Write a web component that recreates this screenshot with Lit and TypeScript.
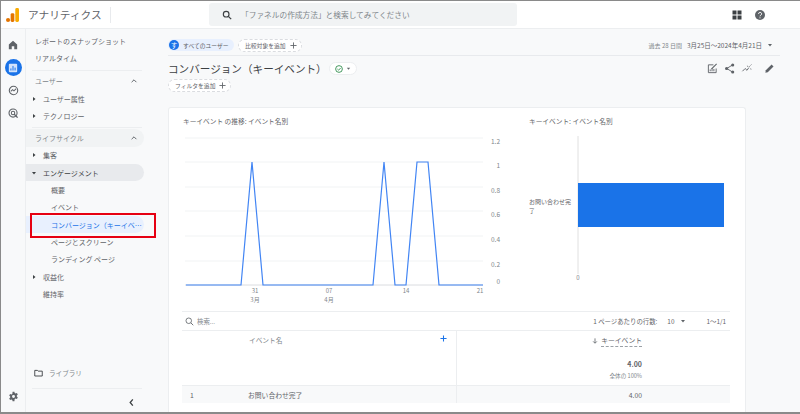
import { LitElement, css, html, svg } from 'lit';
import { customElement } from 'lit/decorators.js';

const FONT = '"Noto Sans CJK JP", Roboto, sans-serif';

const linePts = '186,285 241,285 252,162 263,285 373,285 384,162 395,285 406,285 417,162 428,162 439,285 483,285';
const gridYs = [138, 162, 187, 211, 236, 261, 285];
const yLabels = ['1.2', '1', '0.8', '0.6', '0.4', '0.2', '0'];

const arrow = (down = false) => html`<svg class="tri" viewBox="0 0 6 6" width="6" height="6">
  <path d=${down ? 'M1 2h4L3 4.5z' : 'M2 1l2.5 2L2 5z'} fill="#3c4043"></path>
</svg>`;

const chevUp = html`<svg class="chev" viewBox="0 0 10 10" width="8" height="8">
  <path d="M2 6.5L5 3.5l3 3" fill="none" stroke="#5f6368" stroke-width="1.2"></path>
</svg>`;

const plus = html`<svg viewBox="0 0 8 8" width="7" height="7">
  <path d="M4 .5v7M.5 4h7" stroke="#5f6368" stroke-width="1"></path>
</svg>`;

@customElement('app-sidebar')
class AppSidebar extends LitElement {
  static styles = css`
    :host {
      display: flex;
      flex-direction: column;
      width: 134px;
      flex: none;
      padding-top: 3px;
      font-family: ${css([FONT] as any)};
      background: #f8f9fa;
      font-size: 7px;
      color: #5f6368;
    }
    .row {
      display: flex;
      align-items: center;
      height: 17.3px;
      width: 118px;
      box-sizing: border-box;
      padding-left: 9px;
      border-radius: 0 9px 9px 0;
      white-space: nowrap;
      flex: none;
    }
    .row.sub { padding-left: 25px; }
    .row.child { padding-left: 5px; }
    .row.flat { padding-left: 17px; }
    .tri { margin-right: 6px; flex: none; }
    .row.active { background: #e8eaed; color: #3c4043; }
    .row.sel { background: #e8f0fe; color: #1a73e8; }
    .row.head { justify-content: space-between; padding-right: 6px; color: #80868b; }
    .row.head.pill { background: #f1f3f4; }
    .rule { height: 1px; background: #eceef0; width: 110px; margin: 3px 0 2px 6px; flex: none; }
    .rule.tight { margin: 3px 0 1px 6px; }
    .spacer { flex: 1; }
    .lib { display: flex; align-items: center; gap: 6px; padding-left: 8px; height: 17px; font-size: 6.6px; color: #80868b; margin-bottom: 7px; flex: none; }
    .collapse { display: flex; justify-content: flex-end; align-items: center; width: 109px; height: 23px; padding-top: 4px; box-sizing: border-box; flex: none; }
  `;

  render() {
    return html`
      <div class="row">レポートのスナップショット</div>
      <div class="row">リアルタイム</div>
      <div class="rule"></div>
      <div class="row head"><span>ユーザー</span>${chevUp}</div>
      <div class="row child">${arrow()}<span>ユーザー属性</span></div>
      <div class="row child">${arrow()}<span>テクノロジー</span></div>
      <div class="rule tight"></div>
      <div class="row head pill"><span>ライフサイクル</span>${chevUp}</div>
      <div class="row child">${arrow()}<span>集客</span></div>
      <div class="row child active">${arrow(true)}<span>エンゲージメント</span></div>
      <div class="row sub">概要</div>
      <div class="row sub">イベント</div>
      <div class="row sub sel"><span>コンバージョン（キーイベ…</span></div>
      <div class="row sub">ページとスクリーン</div>
      <div class="row sub">ランディング ページ</div>
      <div class="row child">${arrow()}<span>収益化</span></div>
      <div class="row flat">維持率</div>
      <div class="spacer"></div>
      <div class="lib">
        <svg viewBox="0 0 12 10" width="9" height="8">
          <path d="M1 1.5h3.5l1 1H11v6.5H1z" fill="none" stroke="#3c4043" stroke-width="1.2"></path>
        </svg>
        <span>ライブラリ</span>
      </div>
      <div class="rule" style="margin:0 0 0 6px"></div>
      <div class="collapse">
        <svg viewBox="0 0 8 10" width="7" height="9">
          <path d="M5.5 1.5L2.5 5l3 3.5" fill="none" stroke="#3c4043" stroke-width="1.5"></path>
        </svg>
      </div>
    `;
  }
}

@customElement('app-root')
export class AppRoot extends LitElement {
  static styles = css`
    :host {
      display: block;
      width: 800px;
      height: 414px;
      font-family: ${css([FONT] as any)};
      color: #5f6368;
      overflow: hidden;
    }
    .frame {
      position: relative;
      width: 800px;
      height: 414px;
      box-sizing: border-box;
      border: solid #8a8a8a;
      border-width: 1px 0 2px 1px;
      display: flex;
      flex-direction: column;
      background: #f8f9fa;
    }
    header {
      height: 28px;
      flex: none;
      display: flex;
      align-items: center;
      background: #fff;
      border-bottom: 1px solid #eceef0;
      box-sizing: border-box;
    }
    .logo { margin-left: 5px; flex: none; }
    .brand { margin-left: 9px; font-size: 10.7px; color: #5f6368; width: 82px; flex: none; white-space: nowrap; }
    .sep { width: 1px; height: 16px; background: #e8eaed; flex: none; }
    .search {
      margin-left: 98px;
      width: 308px;
      height: 23px;
      background: #f1f3f4;
      border-radius: 3px;
      display: flex;
      align-items: center;
      padding-left: 13px;
      gap: 9px;
      font-size: 7.7px;
      color: #80868b;
      box-sizing: border-box;
      flex: none;
    }
    .tools { margin-left: auto; display: flex; align-items: center; gap: 13px; margin-right: 35px; }
    .body { flex: 1; display: flex; min-height: 0; }
    .rail {
      width: 25px;
      flex: none;
      display: flex;
      flex-direction: column;
      align-items: center;
      background: #f8f9fa;
      border-right: 1px solid #eceef0;
      padding-top: 7px;
      box-sizing: border-box;
      gap: 6px;
    }
    .rail button {
      all: unset;
      width: 17px;
      height: 17px;
      border-radius: 50%;
      display: flex;
      align-items: center;
      justify-content: center;
    }
    .rail button.on { background: #1a73e8; }
    .rail .gear { margin-top: auto; margin-bottom: 7px; }
    main {
      flex: 1;
      min-width: 0;
      padding: 8px 0 0 8px;
      display: flex;
      flex-direction: column;
    }
    .top {
      width: 612px;
      display: flex;
      align-items: center;
      gap: 4px;
      height: 16px;
      padding-bottom: 2px;
      border-bottom: 1px solid #e8eaed;
      box-sizing: content-box;
      flex: none;
    }
    .chip {
      display: inline-flex;
      align-items: center;
      height: 12px;
      border-radius: 7px;
      font-size: 5.8px;
      white-space: nowrap;
      box-sizing: border-box;
    }
    .chip.user { background: #e8f0fe; width: 66px; gap: 4px; color: #5f6368; }
    .avatar {
      width: 10px;
      height: 10px;
      margin-left: 1px;
      border-radius: 50%;
      background: #1a73e8;
      color: #fff;
      font-size: 6.5px;
      line-height: 10px;
      text-align: center;
      flex: none;
    }
    .chip.add { border: 1px dashed #dadce0; padding: 0 4px 0 6px; gap: 4px; background: #fff; height: 13px; }
    .date { margin-left: auto; margin-right: 7px; font-size: 6.5px; display: flex; align-items: center; gap: 5px; }
    .date b { font-weight: 400; font-size: 6px; color: #80868b; }
    .titlerow { display: flex; align-items: center; height: 21px; padding-top: 2px; width: 612px; flex: none; }
    h1 { margin: 0; font-size: 10.6px; font-weight: 400; color: #3c4043; white-space: nowrap; }
    .status {
      margin-left: 2px;
      width: 28px;
      height: 13px;
      border: 1px solid #eceef0;
      border-radius: 7px;
      display: flex;
      align-items: center;
      justify-content: center;
      gap: 3px;
      box-sizing: border-box;
      background: #fff;
    }
    .actions { margin-left: auto; margin-right: 5px; display: flex; align-items: center; gap: 6px; }
    .filter { flex: none; align-self: flex-start; }
    .card {
      position: relative;
      margin-top: 15px;
      width: 578px;
      flex: 1;
      min-height: 0;
      background: #fff;
      border: 1px solid #eceef0;
      border-bottom: none;
      border-radius: 3px 3px 0 0;
      box-sizing: border-box;
      display: flex;
      flex-direction: column;
    }
    .charts { height: 203px; flex: none; }
    .charts svg { display: block; }
    .charts text { font-family: ${css([FONT] as any)}; }
    .table { margin: 0 15px 0 13px; flex: 1; font-size: 6.8px; display: flex; flex-direction: column; }
    .tbar {
      height: 20px;
      flex: none;
      display: flex;
      align-items: center;
      border-top: 1px solid #eceef0;
      border-bottom: 1px solid #eceef0;
      box-sizing: border-box;
      padding-left: 3px;
      gap: 3px;
      font-size: 6.4px;
    }
    .tbar .hint { color: #80868b; }
    .pager { margin-left: auto; display: flex; align-items: center; font-size: 6.4px; }
    .pager .num { margin-left: 10px; }
    .pager .dd { margin-left: 6px; margin-right: 20px; }
    .pager .rng { margin-right: 4px; }
    .thead { display: grid; grid-template-columns: 275px 1fr; height: 54px; flex: none; }
    .thead .dim { border-right: 1px solid #eceef0; padding: 4px 9px 0 67px; display: flex; justify-content: space-between; }
    .thead .dim span { font-size: 6.7px; color: #80868b; }
    .thead .met { display: flex; flex-direction: column; align-items: flex-end; padding-right: 88px; }
    .mh { display: flex; align-items: center; gap: 3px; margin-top: 4px; }
    .mh span { border-bottom: 1px dashed #9aa0a6; line-height: 11px; font-size: 6.8px; }
    .tot { margin-top: 12px; font-size: 7px; font-weight: 700; color: #5f6368; line-height: 10px; }
    .share { font-size: 5.6px; color: #80868b; margin-top: 3px; line-height: 8px; }
    .trow {
      display: grid;
      grid-template-columns: 275px 1fr;
      height: 18px;
      flex: none;
      background: #f8f9fa;
      border-top: 1px solid #eceef0;
      box-sizing: border-box;
      align-items: center;
      font-size: 6.8px;
    }
    .trow .l { display: flex; border-right: 1px solid #eceef0; height: 100%; align-items: center; }
    .trow .i { width: 66px; padding-left: 8px; box-sizing: border-box; }
    .trow .v { text-align: right; padding-right: 88px; }
    .mark {
      position: absolute;
      left: 29px;
      top: 212px;
      width: 126px;
      height: 25px;
      border: 2px solid #e60012;
      box-sizing: border-box;
    }
  `;

  lineChart() {
    return svg`
      <text x="14" y="16" font-size="6.7" fill="#5f6368">キーイベント の推移: イベント名別</text>
      ${gridYs.map((y, i) => svg`
        <line x1="16" x2="314" y1=${y - 108} y2=${y - 108} stroke=${i === 6 ? '#dadce0' : '#f1f3f4'} stroke-width="1"></line>
        <text x="331" y=${i === 6 ? y - 109 : y - 102} font-size="6.5" text-anchor="end" fill="#80868b">${yLabels[i]}</text>
      `)}
      <polyline transform="translate(-169 -108)" points=${linePts} fill="none" stroke="#4285f4" stroke-width="1.2"></polyline>
      <g font-size="6" fill="#80868b" text-anchor="middle">
        <text x="86" y="185">31</text><text x="86" y="193.5">3月</text>
        <text x="160" y="185">07</text><text x="160" y="193.5">4月</text>
        <text x="237" y="185">14</text>
        <text x="311" y="185">21</text>
      </g>
      <text x="360" y="16" font-size="6.7" fill="#5f6368">キーイベント: イベント名別</text>
      <line x1="409" x2="409" y1="28" y2="166" stroke="#e0e0e0" stroke-width="1"></line>
      <rect x="409" y="75" width="146" height="44" fill="#1a73e8"></rect>
      <g font-size="6" fill="#5f6368">
        <text x="360" y="95.5">お問い合わせ完</text>
        <text x="360" y="104.5">了</text>
      </g>
      <text x="409" y="172" font-size="6" text-anchor="middle" fill="#80868b">0</text>
    `;
  }

  render() {
    return html`
      <div class="frame">
        <header>
          <svg class="logo" viewBox="0 0 14 15" width="13" height="14">
            <rect x="10" y="0" width="4" height="15" rx="1.5" fill="#f9ab00"></rect>
            <rect x="5" y="5.5" width="4" height="9.5" rx="1.5" fill="#e37400"></rect>
            <circle cx="2.2" cy="12.8" r="2.2" fill="#e37400"></circle>
          </svg>
          <span class="brand">アナリティクス</span>
          <span class="sep"></span>
          <div class="search">
            <svg viewBox="0 0 12 12" width="10" height="10">
              <circle cx="5" cy="5" r="3.4" fill="none" stroke="#3c4043" stroke-width="1.4"></circle>
              <path d="M7.6 7.6L11 11" stroke="#3c4043" stroke-width="1.5"></path>
            </svg>
            <span>「ファネルの作成方法」と検索してみてください</span>
          </div>
          <div class="tools">
            <svg viewBox="0 0 10 10" width="10" height="10" fill="#3c4043">
              <rect width="4" height="4" x="0.5" y="0.5"></rect><rect width="4" height="4" x="5.5" y="0.5"></rect>
              <rect width="4" height="4" x="0.5" y="5.5"></rect><rect width="4" height="4" x="5.5" y="5.5"></rect>
            </svg>
            <svg viewBox="0 0 10 10" width="10" height="10">
              <circle cx="5" cy="5" r="5" fill="#5f6368"></circle>
              <path d="M3.6 3.9a1.5 1.5 0 1 1 2.3 1.2c-.6.4-.9.6-.9 1.2" fill="none" stroke="#fff" stroke-width="1"></path>
              <circle cx="5" cy="7.8" r=".6" fill="#fff"></circle>
            </svg>
          </div>
        </header>
        <div class="body">
          <div class="rail">
            <button>
              <svg viewBox="0 0 12 12" width="10" height="10"><path d="M6 1L1 5.5V11h3.5V7.5h3V11H11V5.5z" fill="#5f6368"></path></svg>
            </button>
            <button class="on">
              <svg viewBox="0 0 12 12" width="10" height="10">
                <rect x="1" y="1" width="10" height="10" rx="1.2" fill="#d2e3fc"></rect>
                <path d="M3.5 9V6.5M6 9V3.5M8.5 9V5.5" stroke="#1a73e8" stroke-width="1.2"></path>
              </svg>
            </button>
            <button>
              <svg viewBox="0 0 12 12" width="11" height="11">
                <circle cx="6" cy="6" r="4.6" fill="none" stroke="#5f6368" stroke-width="1.2"></circle>
                <path d="M3 7l2-2 1.5 1.3L9 4" fill="none" stroke="#5f6368" stroke-width="1.1"></path>
              </svg>
            </button>
            <button>
              <svg viewBox="0 0 12 12" width="11" height="11">
                <circle cx="5.5" cy="5.5" r="4.4" fill="none" stroke="#5f6368" stroke-width="1.2"></circle>
                <circle cx="5.5" cy="5.5" r="1.9" fill="none" stroke="#5f6368" stroke-width="1.1"></circle>
                <path d="M6.5 6.5l4 4" stroke="#5f6368" stroke-width="1.5"></path>
              </svg>
            </button>
            <button class="gear">
              <svg viewBox="0 0 12 12" width="11" height="11">
                <path fill="#5f6368" fill-rule="evenodd" d="M5 .8h2l.3 1.5 1 .5 1.4-.6 1 1.7-1.1 1v1.2l1.1 1-1 1.7-1.4-.6-1 .5L7 11.2H5l-.3-1.5-1-.5-1.4.6-1-1.7 1.1-1V5.9l-1.1-1 1-1.7 1.4.6 1-.5zM6 4.4a1.6 1.6 0 1 0 0 3.2 1.6 1.6 0 0 0 0-3.2z"></path>
              </svg>
            </button>
          </div>
          <app-sidebar></app-sidebar>
          <main>
            <div class="top">
              <span class="chip user"><span class="avatar">す</span>すべてのユーザー</span>
              <span class="chip add">比較対象を追加 ${plus}</span>
              <span class="date">
                <b>過去 28 日間</b>
                <span>3月25日～2024年4月21日</span>
                <svg viewBox="0 0 6 6" width="6" height="6"><path d="M1 2h4L3 4.5z" fill="#5f6368"></path></svg>
              </span>
            </div>
            <div class="titlerow">
              <h1>コンバージョン（キーイベント）</h1>
              <span class="status">
                <svg viewBox="0 0 10 10" width="8" height="8">
                  <circle cx="5" cy="5" r="4.2" fill="none" stroke="#188038" stroke-width="1"></circle>
                  <path d="M3 5l1.5 1.5L7 3.8" fill="none" stroke="#188038" stroke-width="1"></path>
                </svg>
                <svg viewBox="0 0 6 6" width="5" height="5"><path d="M1 2h4L3 4.5z" fill="#5f6368"></path></svg>
              </span>
              <span class="actions">
                <svg viewBox="0 0 12 12" width="11" height="11">
                  <path d="M10 6v4.5H1.5V2H7" fill="none" stroke="#5f6368" stroke-width="1"></path>
                  <path d="M3.5 9V7M5.5 9V5.5M7.5 9V6.5" stroke="#5f6368" stroke-width="1"></path>
                  <path d="M5 6.5L10.5 1" stroke="#5f6368" stroke-width="1.2"></path>
                </svg>
                <svg viewBox="0 0 12 12" width="11" height="11">
                  <path d="M9.5 2L3 6l6.5 4" fill="none" stroke="#5f6368" stroke-width="1"></path>
                  <circle cx="9.5" cy="2.2" r="1.7" fill="#5f6368"></circle>
                  <circle cx="2.8" cy="6" r="1.7" fill="#5f6368"></circle>
                  <circle cx="9.5" cy="9.8" r="1.7" fill="#5f6368"></circle>
                </svg>
                <svg viewBox="0 0 12 12" width="12" height="11">
                  <path d="M1 9l3-3 2 2 2-3" fill="none" stroke="#5f6368" stroke-width="1"></path>
                  <path d="M8.5 4L11 1.5M6.5 3L7 4.5M10 6l.5 1.5" fill="none" stroke="#5f6368" stroke-width="1" stroke-dasharray="1.2 .8"></path>
                </svg>
                <svg viewBox="0 0 12 12" width="11" height="11" style="margin-left:5px">
                  <path d="M1.5 10.5l.5-2.6L8.3 1.6l2.1 2.1-6.3 6.3z" fill="#5f6368"></path>
                </svg>
              </span>
            </div>
            <span class="chip add filter">フィルタを追加 ${plus}</span>
            <div class="card">
              <div class="charts">
                <svg width="576" height="203" viewBox="0 0 576 203">${this.lineChart()}</svg>
              </div>
              <div class="table">
                <div class="tbar">
                  <svg viewBox="0 0 12 12" width="9" height="9">
                    <circle cx="5" cy="5" r="3.7" fill="none" stroke="#5f6368" stroke-width="1.1"></circle>
                    <path d="M7.8 7.8L11 11" stroke="#5f6368" stroke-width="1.2"></path>
                  </svg>
                  <span class="hint">検索...</span>
                  <span class="pager">
                    <span>1 ページあたりの行数:</span>
                    <span class="num">10</span>
                    <svg class="dd" viewBox="0 0 6 6" width="6" height="6"><path d="M1 2h4L3 4.5z" fill="#5f6368"></path></svg>
                    <span class="rng">1～1/1</span>
                  </span>
                </div>
                <div class="thead">
                  <div class="dim">
                    <span>イベント名</span>
                    <svg viewBox="0 0 8 8" width="7" height="7"><path d="M4 .5v7M.5 4h7" stroke="#1a73e8" stroke-width="1.2"></path></svg>
                  </div>
                  <div class="met">
                    <div class="mh">
                      <svg viewBox="0 0 8 8" width="6" height="6"><path d="M4 .5v6M1.5 4.5L4 7l2.5-2.5" fill="none" stroke="#5f6368" stroke-width="1.1"></path></svg>
                      <span>キーイベント</span>
                    </div>
                    <div class="tot">4.00</div>
                    <div class="share">全体の 100%</div>
                  </div>
                </div>
                <div class="trow">
                  <div class="l"><span class="i">1</span><span>お問い合わせ完了</span></div>
                  <div class="v">4.00</div>
                </div>
              </div>
            </div>
          </main>
        </div>
        <div class="mark"></div>
      </div>
    `;
  }
}
